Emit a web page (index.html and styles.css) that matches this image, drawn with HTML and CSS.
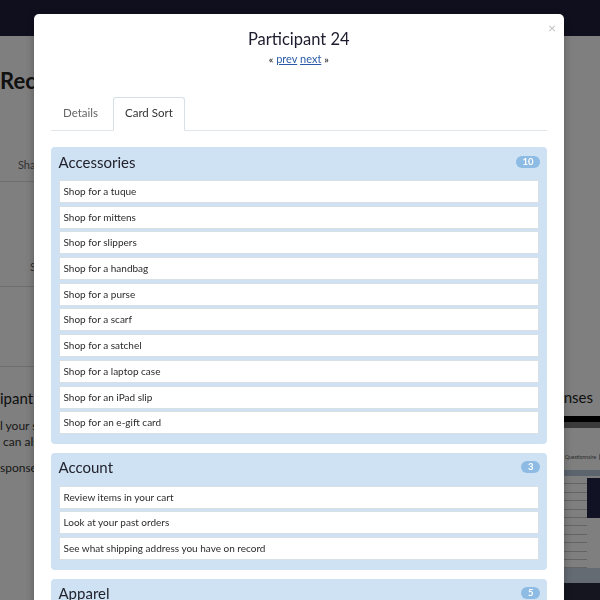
FILE: index.html
```html
<!DOCTYPE html>
<html lang="en">
<head>
<meta charset="utf-8">
<title>Participant 24</title>
<link rel="stylesheet" href="styles.css">
</head>
<body>
<div class="page">
  <header class="topbar"></header>
  <div class="content">
    <div class="left-col">
      <h1 class="page-title">Recruit</h1>
      <div class="row row-a"><span class="label-a">Share</span></div>
      <div class="row row-b"><span class="label-b">S</span></div>
      <div class="row row-c"></div>
      <h2 class="sec-title">ipant</h2>
      <p class="sec-text">l your survey<br><span class="indent">can also</span></p>
      <p class="sec-text2">sponses</p>
    </div>
    <div class="right-col">
      <h2 class="resp-title">Responses</h2>
      <div class="bar-black"></div>
      <div class="bar-gray"></div>
      <div class="thumb-tabs"><span>Questionnaire</span><span class="sep">Ca</span></div>
      <div class="thumb-table">
        <div class="thumb-head"></div>
        <div class="thumb-body">
          <div class="thumb-rows">
            <div class="thumb-row"></div><div class="thumb-row"></div><div class="thumb-row"></div>
            <div class="thumb-row"></div><div class="thumb-row"></div><div class="thumb-row"></div>
            <div class="thumb-row"></div><div class="thumb-row"></div><div class="thumb-row"></div>
            <div class="thumb-row"></div><div class="thumb-row"></div>
          </div>
          <div class="thumb-dark"></div>
        </div>
        <div class="thumb-foot"></div>
        <div class="thumb-bottom"></div>
      </div>
    </div>
  </div>
</div>
<div class="overlay"></div>
<div class="modal">
  <button class="close" type="button">&times;</button>
  <div class="modal-head">
    <h3 class="modal-title">Participant 24</h3>
    <div class="pager"><span class="arrow">&laquo;</span> <a href="#">prev</a> <a href="#">next</a> <span class="arrow">&raquo;</span></div>
  </div>
  <ul class="tabs">
    <li class="tab">Details</li>
    <li class="tab active">Card Sort</li>
  </ul>
  <div class="groups">
    <section class="group">
      <div class="group-head"><span class="group-name">Accessories</span><span class="badge">10</span></div>
      <ul class="cards">
        <li class="card">Shop for a tuque</li>
        <li class="card">Shop for mittens</li>
        <li class="card">Shop for slippers</li>
        <li class="card">Shop for a handbag</li>
        <li class="card">Shop for a purse</li>
        <li class="card">Shop for a scarf</li>
        <li class="card">Shop for a satchel</li>
        <li class="card">Shop for a laptop case</li>
        <li class="card">Shop for an iPad slip</li>
        <li class="card">Shop for an e-gift card</li>
      </ul>
    </section>
    <section class="group">
      <div class="group-head"><span class="group-name">Account</span><span class="badge">3</span></div>
      <ul class="cards">
        <li class="card">Review items in your cart</li>
        <li class="card">Look at your past orders</li>
        <li class="card">See what shipping address you have on record</li>
      </ul>
    </section>
    <section class="group">
      <div class="group-head"><span class="group-name">Apparel</span><span class="badge">5</span></div>
      <ul class="cards">
        <li class="card">Shop for a jacket</li>
        <li class="card">Shop for jeans</li>
        <li class="card">Shop for a sweater</li>
        <li class="card">Shop for a dress</li>
        <li class="card">Shop for a t-shirt</li>
      </ul>
    </section>
  </div>
</div>
</body>
</html>
```
FILE: styles.css
```css
* { box-sizing: border-box; }
html, body {
  margin: 0;
  padding: 0;
  height: 600px;
  overflow: hidden;
  background: #ffffff;
  font-family: Lato, "Liberation Sans", sans-serif;
}
.page { width: 600px; }
.topbar { height: 36px; background: #1f1f3d; }
.content { display: flex; justify-content: space-between; }
.left-col { width: 300px; }
.page-title {
  margin: 32px 0 0;
  font-size: 22px;
  line-height: 26px;
  font-weight: 700;
  color: #222;
}
.row { border-bottom: 1px solid #dedede; font-size: 11px; line-height: 14px; color: #666; }
.row-a { padding: 64px 0 9px 18px; }
.row-b { padding: 78px 0 12px 30px; }
.row-c { height: 80px; }
.sec-title {
  margin: 21px 0 0;
  font-size: 15px;
  line-height: 20px;
  font-weight: 400;
  color: #222;
}
.sec-text, .sec-text2 {
  margin: 10px 0 0;
  font-size: 12px;
  line-height: 16px;
  color: #333;
}
.indent { padding-left: 3px; }
.right-col { width: 100px; }
.resp-title {
  margin: 351px 0 0;
  font-size: 15px;
  line-height: 20px;
  font-weight: 400;
  color: #222;
  text-align: right;
  padding-right: 7px;
}
.bar-black { margin-top: 9px; height: 6px; background: #000; }
.bar-gray { height: 6px; background: #777; }
.thumb-tabs {
  margin-top: 26px;
  padding-left: 65px;
  display: flex;
  gap: 3px;
  font-size: 5px;
  line-height: 6px;
  color: #555;
  white-space: nowrap;
}
.thumb-tabs .sep { border-left: 1px solid #aaa; padding-left: 3px; }
.thumb-table { margin-top: 10px; }
.thumb-head { height: 6px; background: #b8c8dc; }
.thumb-body { display: flex; height: 92px; }
.thumb-rows { flex: 1; }
.thumb-row { height: 8.4px; border-bottom: 1px solid #c8c8c8; }
.thumb-dark { width: 13px; height: 40px; margin-top: 2px; background: #24244a; }
.thumb-foot { height: 15px; background: #c8d6e6; }
.thumb-bottom { height: 20px; background: #2a2a3e; }
.overlay {
  position: fixed;
  inset: 0;
  background: rgba(0, 0, 0, 0.5);
}
.modal {
  position: absolute;
  top: 14px;
  left: 33.5px;
  width: 530.5px;
  height: 700px;
  background: #fff;
  border-radius: 5px;
  padding: 15px 17px 0;
  box-shadow: 0 3px 9px rgba(0, 0, 0, 0.3);
}
.close {
  position: absolute;
  top: 7px;
  right: 8px;
  border: 0;
  background: none;
  padding: 0;
  font-family: Lato, "Liberation Sans", sans-serif;
  font-size: 14px;
  line-height: 14px;
  color: #c2c2c2;
}
.modal-head { text-align: center; }
.modal-title {
  margin: 0;
  font-size: 16.5px;
  line-height: 20px;
  font-weight: 400;
  color: #1c1c2e;
}
.pager {
  margin-top: 3px;
  font-size: 11px;
  line-height: 14px;
  color: #444;
}
.pager a { color: #2b5ca8; text-decoration: underline; }
.pager .arrow { font-size: 10px; font-weight: 700; }
.tabs {
  list-style: none;
  margin: 31px 0 0;
  padding: 0;
  display: flex;
  border-bottom: 1px solid #dfe5e9;
}
.tab {
  margin-bottom: -1px;
  margin-right: 2px;
  padding: 7px 11.5px 9px;
  line-height: 16px;
  font-size: 11.5px;
  color: #666;
  border: 1px solid transparent;
  border-radius: 3px 3px 0 0;
}
.tab.active {
  color: #333;
  background: #fff;
  border-color: #d6e0e6;
  border-bottom-color: #fff;
}
.groups { margin-top: 16px; }
.group {
  background: #cee2f3;
  border-radius: 4px;
  padding: 4.5px 8px 9.5px;
  margin-bottom: 9px;
}
.group-head {
  height: 20px;
  margin-bottom: 8.5px;
  display: flex;
  justify-content: space-between;
  align-items: center;
}
.group-name {
  font-size: 15px;
  line-height: 20px;
  color: #23232d;
}
.badge {
  height: 12px;
  line-height: 12px;
  padding: 0 6.5px;
  border-radius: 6px;
  background: #8dbbe4;
  color: #fff;
  font-size: 9.5px;
  font-weight: 700;
  margin-right: -1px;
}
.cards {
  list-style: none;
  margin: 0;
  padding: 0;
  display: flex;
  flex-direction: column;
  gap: 2.7px;
}
.card {
  height: 23px;
  border: 1px solid #d8e0e6;
  background: #fff;
  padding: 0 4px;
  font-size: 10px;
  line-height: 21px;
  color: #2b2b2b;
}
```
